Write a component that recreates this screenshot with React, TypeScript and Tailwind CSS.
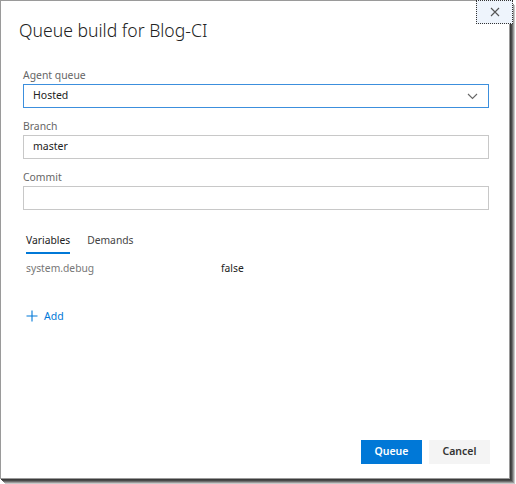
const font = { fontFamily: '"Noto Sans", "Open Sans", Arial, sans-serif' };

function Field({ label, value, active }: { label: string; value?: string; active?: boolean }) {
  return (
    <div className="flex flex-col">
      <label className="text-[10.4px] leading-[14px] text-[#666]">{label}</label>
      <div
        className={
          "mt-[2px] flex h-[24px] items-center justify-between px-[9px] text-[10.5px] text-[#222] " +
          (active ? "border border-[#3c8fdd]" : "border border-[#c8c8c8]")
        }
      >
        <span>{value}</span>
        {active ? (
          <svg width="11" height="7" viewBox="0 0 11 7" className="mr-[1px]" aria-hidden>
            <path d="M1 1l4.5 4.5L10 1" stroke="#666" strokeWidth="1.1" fill="none" />
          </svg>
        ) : null}
      </div>
    </div>
  );
}

export default function App() {
  return (
    <div className="relative h-[484px] w-[516px] bg-white" style={font}>
      <div className="flex h-[479px] w-[510px] flex-col border border-[#9a9a9a] bg-white shadow-[1px_1px_0_#3c3c3c,2px_2px_0_#4a4a4a,3px_3px_0_#6e6e6e,4px_4px_0_#9a9a9a,5px_5px_0_#c9c9c9]">
        <h1 className="ml-[18px] mt-[15px] text-[17.6px] font-light leading-[28px] text-[#222]">
          Queue build for Blog-CI
        </h1>

        <div className="ml-[22px] mr-[20px] mt-[24px] flex flex-col gap-[11px]">
          <Field label="Agent queue" value="Hosted" active />
          <Field label="Branch" value="master" />
          <Field label="Commit" />
        </div>

        <div className="ml-[25px] mt-[22px] flex gap-[17px] text-[10.3px]">
          <div className="flex flex-col">
            <span className="leading-[16px] text-[#222]">Variables</span>
            <span className="mt-[4px] h-[2px] bg-[#0078d7]" />
          </div>
          <span className="leading-[16px] text-[#444]">Demands</span>
        </div>

        <div className="ml-[25px] mt-[6px] flex text-[10.3px] leading-[16px]">
          <span className="w-[195px] text-[#777]">system.debug</span>
          <span className="text-[#222]">false</span>
        </div>

        <div className="ml-[25px] mt-[32px] flex items-center gap-[6px] text-[10.5px] leading-[16px] text-[#0078d7]">
          <svg width="12" height="12" viewBox="0 0 12 12" aria-hidden>
            <path d="M6 0.5v11M0.5 6h11" stroke="#0078d7" strokeWidth="1.1" fill="none" />
          </svg>
          <span>Add</span>
        </div>

        <div className="mt-auto mb-[14px] mr-[19px] flex justify-end gap-[7px] text-[10.5px] font-semibold">
          <button type="button" className="h-[24px] w-[61px] bg-[#0078d7] text-white">
            Queue
          </button>
          <button type="button" className="h-[24px] w-[61px] bg-[#f4f4f4] text-[#333]">
            Cancel
          </button>
        </div>
      </div>

      <button
        type="button"
        className="absolute left-[476px] top-0 flex h-[24px] w-[37px] items-center justify-center border border-dotted border-[#333] bg-[#eef4fc]"
        aria-label="Close"
      >
        <svg width="10" height="10" viewBox="0 0 10 10" aria-hidden>
          <path d="M1 1l8 8M9 1l-8 8" stroke="#555" strokeWidth="1.1" fill="none" />
        </svg>
      </button>
    </div>
  );
}
